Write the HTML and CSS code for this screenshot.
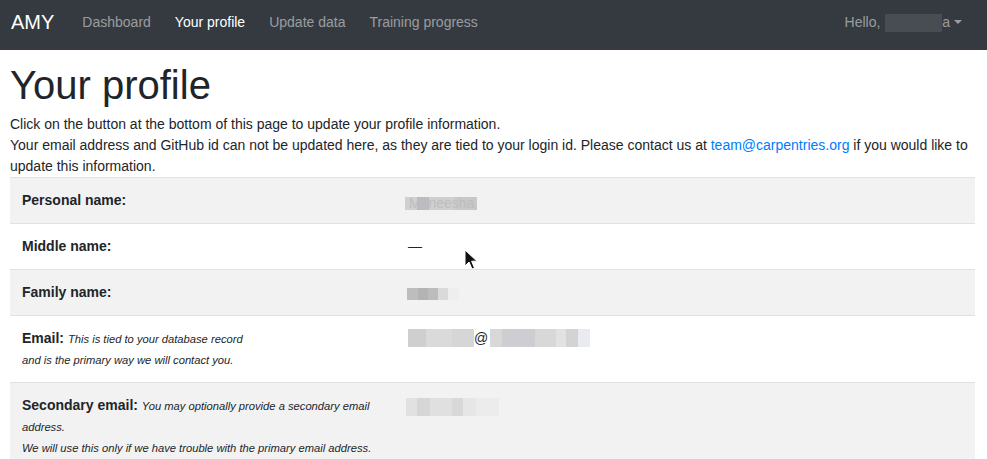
FILE: index.html
```html
<!DOCTYPE html>
<html lang="en">
<head>
<meta charset="utf-8">
<title>Your profile - AMY</title>
<link rel="stylesheet" href="styles.css">
</head>
<body>
<nav class="navbar">
  <a class="brand" href="#">AMY</a>
  <ul class="nav">
    <li><a class="nav-link" href="#">Dashboard</a></li>
    <li><a class="nav-link active" href="#">Your profile</a></li>
    <li><a class="nav-link" href="#">Update data</a></li>
    <li><a class="nav-link" href="#">Training progress</a></li>
  </ul>
  <div class="nav-right">
    <a class="nav-link dropdown-toggle" href="#">Hello, <span class="redact-nav"></span>a</a>
  </div>
</nav>

<main class="container">
  <h1 class="title">Your profile</h1>
  <p class="lead-text">Click on the button at the bottom of this page to update your profile information.</p>
  <p class="lead-text">Your email address and GitHub id can not be updated here, as they are tied to your login id. Please contact us at <a class="link" href="#">team@carpentries.org</a> if you would like to update this information.</p>

  <table class="profile-table">
    <tbody>
      <tr>
        <th>Personal name:</th>
        <td><span class="blur blur-first">Maneesha</span></td>
      </tr>
      <tr>
        <th>Middle name:</th>
        <td>—</td>
      </tr>
      <tr>
        <th>Family name:</th>
        <td><span class="blur blur-family"></span></td>
      </tr>
      <tr>
        <th>Email: <small class="help">This is tied to your database record<br>and is the primary way we will contact you.</small></th>
        <td><span class="blur blur-user"></span>@<span class="blur blur-domain"></span></td>
      </tr>
      <tr>
        <th>Secondary email: <small class="help">You may optionally provide a secondary email address.<br>We will use this only if we have trouble with the primary email address.</small></th>
        <td><span class="blur blur-second"></span></td>
      </tr>
    </tbody>
  </table>
</main>

<svg class="cursor" width="14" height="22" viewBox="0 0 14 22" aria-hidden="true">
  <path d="M1 1 L1 17 L5 13 L8 20 L10.5 19 L7.6 12.2 L13 12.2 Z" fill="#111" stroke="#fff" stroke-width="1"/>
</svg>
</body>
</html>
```

FILE: styles.css
```css
* { box-sizing: border-box; }

html, body {
  margin: 0;
  padding: 0;
}

body {
  font-family: "Liberation Sans", Arial, Helvetica, sans-serif;
  font-size: 14px;
  line-height: 1.5;
  color: #212529;
  background: #fff;
}

a { text-decoration: none; }

.navbar {
  display: flex;
  align-items: center;
  height: 50px;
  padding: 0 13px 6px 11px;
  background: #343a40;
}

.brand {
  font-size: 20px;
  line-height: 1.5;
  color: #fff;
  margin-right: 16px;
}

.nav {
  display: flex;
  list-style: none;
  margin: 0;
  padding: 0;
}

.nav-link {
  display: block;
  padding: 0 12px;
  font-size: 14px;
  color: rgba(255, 255, 255, 0.5);
}

.nav-link.active { color: #fff; }

.nav-right { margin-left: auto; }

.redact-nav {
  display: inline-block;
  width: 57px;
  height: 18px;
  margin-left: 1px;
  vertical-align: -5px;
  background: #484c53;
}

.dropdown-toggle::after {
  content: "";
  display: inline-block;
  margin-left: 4px;
  vertical-align: 3px;
  border-top: 4.5px solid rgba(255, 255, 255, 0.5);
  border-left: 4.5px solid transparent;
  border-right: 4.5px solid transparent;
}

.container {
  padding: 0 12px 0 10px;
}

.title {
  font-size: 40px;
  font-weight: 500;
  line-height: 1.2;
  margin: 11px 0 5px;
}

.lead-text { margin: 0; }

.link { color: #007bff; }

.profile-table {
  width: 100%;
  border-collapse: collapse;
  margin: 0;
}

.profile-table th,
.profile-table td {
  padding: 12px;
  vertical-align: top;
  border-top: 1px solid #dee2e6;
  text-align: left;
}

.profile-table th {
  width: 40%;
  font-weight: bold;
}

.profile-table tr:nth-child(odd) { background: #f2f2f2; }

.help {
  font-size: 80%;
  font-weight: normal;
  font-style: italic;
}

.blur {
  display: inline-block;
  vertical-align: -3px;
}

.blur-first {
  height: 13px;
  line-height: 13px;
  padding: 0 3px 0 4px;
  margin-left: -3px;
  color: #bdbdc2;
  background: linear-gradient(90deg, #d0d0d0 0 12px, #bcbcbc 12px 24px, #cfcfcf 24px 50px, #c8c8c8 50px 100%);
}

.blur-family {
  width: 52px;
  height: 12px;
  margin-left: -1px;
  background: linear-gradient(90deg, #bdbdbd 0 11px, #b3b3b3 11px 21px, #bcbcbc 21px 31px, #dadada 31px 41px, #eeeeee 41px 52px);
}

.blur-user {
  width: 66px;
  height: 18px;
  vertical-align: -4px;
  background: linear-gradient(90deg, #cfcfcf 0 18px, #dadada 18px 44px, #d6d6d6 44px 66px);
}

.blur-domain {
  width: 100px;
  height: 18px;
  margin-left: 2px;
  vertical-align: -4px;
  background: linear-gradient(90deg, #d8d8d8 0 12px, #cdcdd2 12px 45px, #d8d8d8 45px 66px, #e2e2e2 66px 76px, #d3d3d6 76px 88px, #eaebf0 88px 100px);
}

.blur-second {
  width: 93px;
  height: 18px;
  margin-left: -2px;
  margin-top: 3px;
  background: linear-gradient(90deg, #e1e1e1 0 11px, #d6d6d6 11px 24px, #e0e0e0 24px 46px, #d8d8d8 46px 57px, #e6e6e6 57px 70px, #ececec 70px 93px);
}

.cursor {
  position: absolute;
  left: 464px;
  top: 249px;
}
```
